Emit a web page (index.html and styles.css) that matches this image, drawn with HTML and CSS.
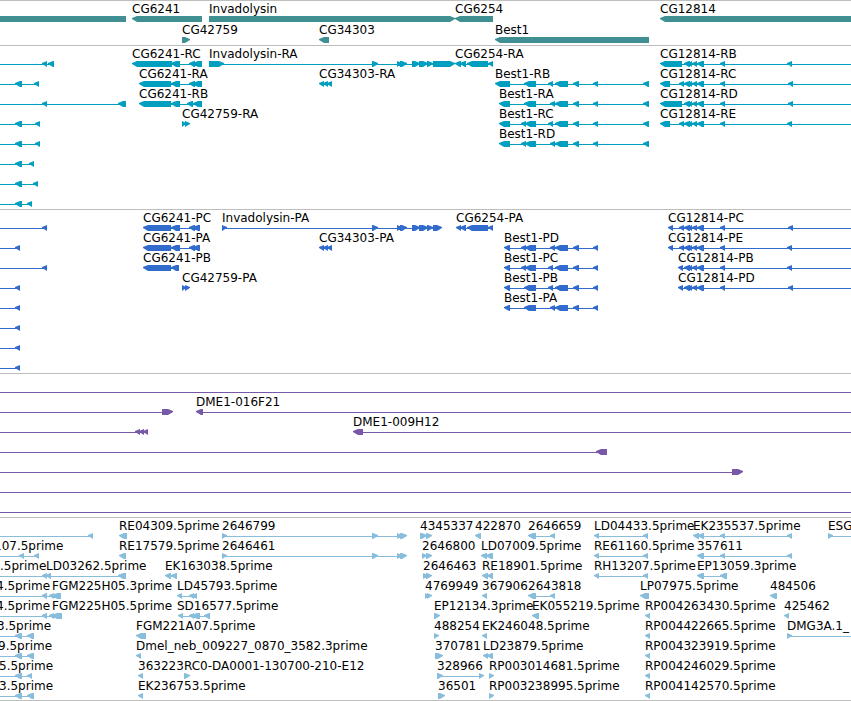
FILE: index.html
```html
<!DOCTYPE html>
<html lang="en">
<head>
<meta charset="utf-8">
<title>Genome tracks</title>
<link rel="stylesheet" href="styles.css">
</head>
<body>
<main class="browser">
  <section class="track track-genes" data-track="genes" aria-label="Genes"></section>
  <section class="track track-transcripts" data-track="transcripts" aria-label="Transcripts"></section>
  <section class="track track-proteins" data-track="proteins" aria-label="Proteins"></section>
  <section class="track track-clones" data-track="clones" aria-label="Clones"></section>
  <section class="track track-ests" data-track="ests" aria-label="ESTs"></section>
</main>
<script src="tracks.js"></script>
</body>
</html>
```
FILE: styles.css
```css
body {
  margin: 0;
  background: #fff;
  color: #000;
  font-family: "DejaVu Sans", Verdana, sans-serif;
  font-size: 12px;
  line-height: 16px;
}

.browser {
  border-bottom: 1px solid #bebebe;
}

.track {
  display: flex;
  flex-direction: column;
  overflow: hidden;
  padding-bottom: 3px;
  border-top: 1px solid #bebebe;
}

.track-genes {
  gap: 1px;
  color: #3f8f93;
}

.track-transcripts {
  color: #009fbf;
}

.track-proteins {
  color: #316ccc;
}

.track-clones {
  color: #7759a8;
}

.track-ests {
  padding-bottom: 2px;
  color: #88bedc;
}

.row {
  position: relative;
  height: 20px;
}

.glyphs {
  display: block;
  width: 100%;
  height: 21px;
  fill: currentColor;
}

.label {
  position: absolute;
  top: 0;
  color: #000;
  white-space: nowrap;
}
```
FILE: tracks.js
```js
// A feature is [strand, [start, end, start, end, ...], label, labelStart].
// LEFT and FAR stand for ends that lie outside the visible region.
const LEFT = -9;
const FAR = 4000;

const off = (...blocks) => ['<', [LEFT, LEFT, ...blocks]];
const line = ['<', [LEFT, LEFT, FAR, FAR]];
const cg12814 = (first, last) => [...first, 684, 690, 688, 692, 692, 697, 697, 704, 720, 725, last, last + 5, FAR, FAR];
const best1 = (first, mid) => [...first, mid, mid + 5, 555, 568, 573, 579, 593, 598];
const invadolysin = [372, 378, 397, 402, 400, 407, 412, 420, 419, 428, 427, 433];
const est2646 = [222, 227, 372, 378, 397, 402, 400, 407];
const cg6254 = [460, 466, 467, 488, 488, 493];

const tracks = {
  genes: [
    [
      ['<', [LEFT, 126]],
      ['<', [132, 202], 'CG6241'],
      ['>', [209, 455], 'Invadolysin'],
      ['<', [455, 493], 'CG6254'],
      ['<', [660, FAR], 'CG12814']
    ],
    [
      ['>', [182, 190], 'CG42759'],
      ['<', [319, 329], 'CG34303'],
      ['<', [495, 649], 'Best1']
    ]
  ],
  transcripts: [
    [
      off(42, 47, 48, 54),
      ['<', [132, 172, 171, 180, 189, 195, 193, 202], 'CG6241-RC'],
      ['>', [209, 224, ...invadolysin, 433, 455], 'Invadolysin-RA'],
      ['<', [455, 461, ...cg6254], 'CG6254-RA'],
      ['<', cg12814([660, 682], 787), 'CG12814-RB']
    ],
    [
      off(15, 22, 34, 39),
      ['<', [139, 171, 171, 180, 189, 195, 193, 202], 'CG6241-RA'],
      ['<', [319, 324, 323, 328, 327, 332], 'CG34303-RA'],
      ['<', [...best1([495, 510, 524, 536], 548), 643, 649], 'Best1-RB'],
      ['<', cg12814([660, 670, 679, 684], 788), 'CG12814-RC']
    ],
    [
      off(42, 47, 118, 126),
      ['<', [139, 171, 171, 180, 187, 193, 193, 202], 'CG6241-RB'],
      ['<', [...best1([499, 510, 524, 536], 550), 643, 649], 'Best1-RA'],
      ['<', cg12814([660, 682], 788), 'CG12814-RD']
    ],
    [
      off(15, 22, 35, 40),
      ['>', [182, 186, 185, 190], 'CG42759-RA'],
      ['<', [...best1([499, 510, 521, 526, 525, 536], 548), 643, 649], 'Best1-RC'],
      ['<', cg12814([660, 670, 679, 684], 787), 'CG12814-RE']
    ],
    [
      off(15, 22, 35, 40),
      ['<', [...best1([499, 510, 521, 526, 525, 536], 550), 643, 649], 'Best1-RD']
    ],
    [off(15, 22, 29, 34)],
    [off(15, 22, 33, 38)],
    [off(15, 22, 27, 32)]
  ],
  proteins: [
    [
      off(42, 47),
      ['<', [143, 171, 171, 180, 189, 195, 193, 200], 'CG6241-PC'],
      ['>', [222, 227, ...invadolysin, 433, 442], 'Invadolysin-PA'],
      ['<', [456, 461, ...cg6254], 'CG6254-PA'],
      ['<', cg12814([668, 673, 679, 684], 788), 'CG12814-PC']
    ],
    [
      off(15, 20),
      ['<', [143, 171, 171, 180, 189, 195, 193, 200], 'CG6241-PA'],
      ['<', [319, 324, 323, 328, 327, 332], 'CG34303-PA'],
      ['<', best1([504, 510, 521, 526, 525, 536], 550), 'Best1-PD'],
      ['<', cg12814([668, 673, 679, 684], 787), 'CG12814-PE']
    ],
    [
      off(42, 47),
      ['<', [143, 171, 171, 179], 'CG6241-PB'],
      ['<', best1([504, 510, 521, 526, 525, 536], 548), 'Best1-PC'],
      ['<', cg12814([678, 683], 787), 'CG12814-PB']
    ],
    [
      off(15, 20),
      ['>', [182, 186, 185, 190], 'CG42759-PA'],
      ['<', best1([504, 510, 524, 536], 548), 'Best1-PB'],
      ['<', cg12814([678, 683], 788), 'CG12814-PD']
    ],
    [
      off(15, 20),
      ['<', best1([504, 510, 524, 536], 550), 'Best1-PA']
    ],
    [off(15, 20)],
    [off(15, 20)],
    [off(15, 20)]
  ],
  clones: [
    [line],
    [
      ['>', [LEFT, LEFT, 162, 173]],
      ['<', [196, 203, FAR, FAR], 'DME1-016F21']
    ],
    [
      off(135, 140, 139, 144, 143, 148),
      ['<', [353, 363, FAR, FAR], 'DME1-009H12']
    ],
    [off(596, 607)],
    [['>', [LEFT, LEFT, 732, 743]]],
    [line],
    [line]
  ],
  ests: [
    [
      off(88, 93),
      ['<', [119, 127], 'RE04309.5prime'],
      ['>', est2646, '2646799'],
      ['>', [420, 427, 426, 432], '4345337'],
      ['<', [475, 481], '422870'],
      ['<', [528, 536, 550, 555], '2646659'],
      ['<', [594, 599, 643, 648], 'LD04433.5prime'],
      ['<', [693, 699, 698, 704, 720, 725, 787, 792], 'EK235537.5prime'],
      ['>', [828, 833, FAR, FAR], 'ESG']
    ],
    [
      [...off(19, 24, 34, 39), '107.5prime', -6],
      ['<', [119, 126], 'RE17579.5prime'],
      ['>', est2646, '2646461'],
      ['>', [422, 427, 426, 432], '2646800'],
      ['<', [481, 487, 486, 493], 'LD07009.5prime'],
      ['<', [594, 599, 643, 648], 'RE61160.5prime'],
      ['<', [697, 704, 720, 725, 787, 792], '357611']
    ],
    [
      [...off(42, 47, 46, 51), '.5prime', 0],
      ['<', [46, 51, 118, 126], 'LD03262.5prime'],
      ['<', [165, 171, 171, 177], 'EK163038.5prime'],
      ['>', [423, 428, 426, 432], '2646463'],
      ['<', [482, 488, 487, 493], 'RE18901.5prime'],
      ['<', [594, 599, 643, 648], 'RH13207.5prime'],
      ['<', [697, 704, 720, 727], 'EP13059.3prime']
    ],
    [
      [...off(42, 47), '4.5prime', -4],
      ['<', [42, 47, 49, 54, 52, 61], 'FGM225H05.3prime', 52],
      ['<', [177, 182, 189, 194, 192, 197], 'LD45793.5prime'],
      ['>', [425, 429, 427, 432], '4769949'],
      ['<', [482, 487], '367906'],
      ['<', [528, 536, 550, 555], '2643818'],
      ['<', [640, 649], 'LP07975.5prime'],
      ['<', [770, 777], '484506']
    ],
    [
      [...off(42, 47), '4.5prime', -4],
      ['<', [42, 47, 49, 54, 52, 62], 'FGM225H05.5prime', 52],
      ['<', [178, 183, 189, 194, 192, 200, 204, 210], 'SD16577.5prime', 177],
      ['>', [434, 440], 'EP12134.3prime'],
      ['<', [532, 539], 'EK055219.5prime'],
      ['<', [645, 650], 'RP004263430.5prime'],
      ['<', [784, 789], '425462']
    ],
    [
      [...off(15, 22, 27, 34), '3.5prime', -3],
      ['<', [136, 146], 'FGM221A07.5prime'],
      ['>', [434, 439], '488254'],
      ['<', [482, 487], 'EK246048.5prime'],
      ['<', [645, 650], 'RP004422665.5prime'],
      ['>', [787, 792, FAR, FAR], 'DMG3A.1_']
    ],
    [
      [...off(15, 22, 27, 34), '9.5prime', -2],
      ['<', [136, 141], 'Dmel_neb_009227_0870_3582.3prime'],
      ['>', [435, 443], '370781'],
      ['<', [483, 488, 487, 493], 'LD23879.5prime'],
      ['<', [645, 650], 'RP004323919.5prime']
    ],
    [
      [...off(15, 22, 27, 32), '5.5prime', -1],
      ['<', [138, 143], '363223'],
      ['>', [184, 190], 'RC0-DA0001-130700-210-E12'],
      ['>', [437, 443, 479, 484], '328966'],
      ['>', [489, 494], 'RP003014681.5prime'],
      ['<', [645, 650], 'RP004246029.5prime']
    ],
    [
      [...off(15, 22, 27, 34), '3.5prime', -1],
      ['<', [138, 143], 'EK236753.5prime'],
      ['>', [438, 445], '36501'],
      ['>', [489, 494], 'RP003238995.5prime'],
      ['<', [645, 650], 'RP004142570.5prime']
    ]
  ]
};

const TOP = 15;
const MIDDLE = 18;
const BOTTOM = 21;

// A block is a bar whose end tapers to a point in the strand's direction.
function blockPath(strand, start, end) {
  const head = Math.min(5, end - start);
  return strand === '<'
    ? `M${start} ${MIDDLE - 1}L${start + head} ${TOP}H${end}V${BOTTOM}H${start + head}L${start} ${MIDDLE}Z`
    : `M${start} ${TOP}H${end - head}L${end} ${MIDDLE - 1}V${MIDDLE}L${end - head} ${BOTTOM}H${start}Z`;
}

function featurePath([strand, blocks]) {
  let path = '';
  if (blocks.length > 2) {
    path += `M${blocks[0] + 1} ${MIDDLE}H${blocks[blocks.length - 1] - 1}v1H${blocks[0] + 1}Z`;
  }
  for (let i = 0; i < blocks.length; i += 2) {
    if (blocks[i + 1] > blocks[i]) {
      path += blockPath(strand, blocks[i], blocks[i + 1]);
    }
  }
  return path;
}

function rowMarkup(features) {
  const paths = features.map(f => `<path d="${featurePath(f)}"/>`).join('');
  const labels = features
    .filter(f => f[2])
    .map(f => `<span class="label" style="left:${f[3] ?? f[1][0]}px">${f[2]}</span>`)
    .join('');
  return `<div class="row"><svg class="glyphs" aria-hidden="true">${paths}</svg>${labels}</div>`;
}

document.querySelectorAll('.track').forEach(section => {
  section.innerHTML = tracks[section.dataset.track].map(rowMarkup).join('');
});
```
